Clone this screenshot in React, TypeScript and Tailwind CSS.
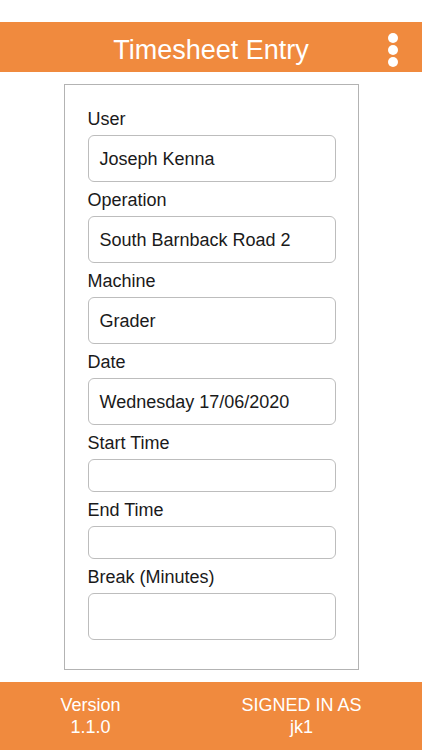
import React from "react";

const fields: { label: string; value: string; h: string }[] = [
  { label: "User", value: "Joseph Kenna", h: "h-[47px]" },
  { label: "Operation", value: "South Barnback Road 2", h: "h-[47px]" },
  { label: "Machine", value: "Grader", h: "h-[47px]" },
  { label: "Date", value: "Wednesday 17/06/2020", h: "h-[47px]" },
  { label: "Start Time", value: "", h: "h-[33px]" },
  { label: "End Time", value: "", h: "h-[33px]" },
  { label: "Break (Minutes)", value: "", h: "h-[47px]" },
];

export default function App() {
  return (
    <div className="w-[422px] h-[750px] bg-white flex flex-col text-black font-['Liberation_Sans',Arial,sans-serif]">
      <div className="h-[22px] shrink-0" />
      <div className="h-[50px] shrink-0 bg-[#f08a3e] relative flex items-center justify-center">
        <span className="text-white text-[27px] leading-none pt-[6px]">Timesheet Entry</span>
        <div className="absolute right-[24px] top-[11px] flex flex-col gap-[2px]">
          <div className="w-[10px] h-[10px] rounded-full bg-white" />
          <div className="w-[10px] h-[10px] rounded-full bg-white" />
          <div className="w-[10px] h-[10px] rounded-full bg-white" />
        </div>
      </div>
      <div className="flex-1 flex justify-center pt-[12px] pb-[12px]">
        <div className="w-[295px] border border-[#b3b3b3] pl-[23px] pr-[22px] pt-[16px] pb-[28px] flex flex-col">
          {fields.map((f) => (
            <div key={f.label} className="flex flex-col">
              <div className="mt-[8px] mb-[6px] h-[20px] text-[18px] leading-[20px] text-[#1a1a1a]">
                {f.label}
              </div>
              <div
                className={`${f.h} w-[248px] border border-[#bdbdbd] rounded-[6px] flex items-center px-[11px] pt-[2px] text-[18px] text-[#1a1a1a]`}
              >
                {f.value}
              </div>
            </div>
          ))}
        </div>
      </div>
      <div className="h-[68px] shrink-0 bg-[#f08a3e] flex justify-around items-center text-white text-[18px] leading-[22px]">
        <div className="flex flex-col items-center">
          <span>Version</span>
          <span>1.1.0</span>
        </div>
        <div className="flex flex-col items-center">
          <span>SIGNED IN AS</span>
          <span>jk1</span>
        </div>
      </div>
    </div>
  );
}
